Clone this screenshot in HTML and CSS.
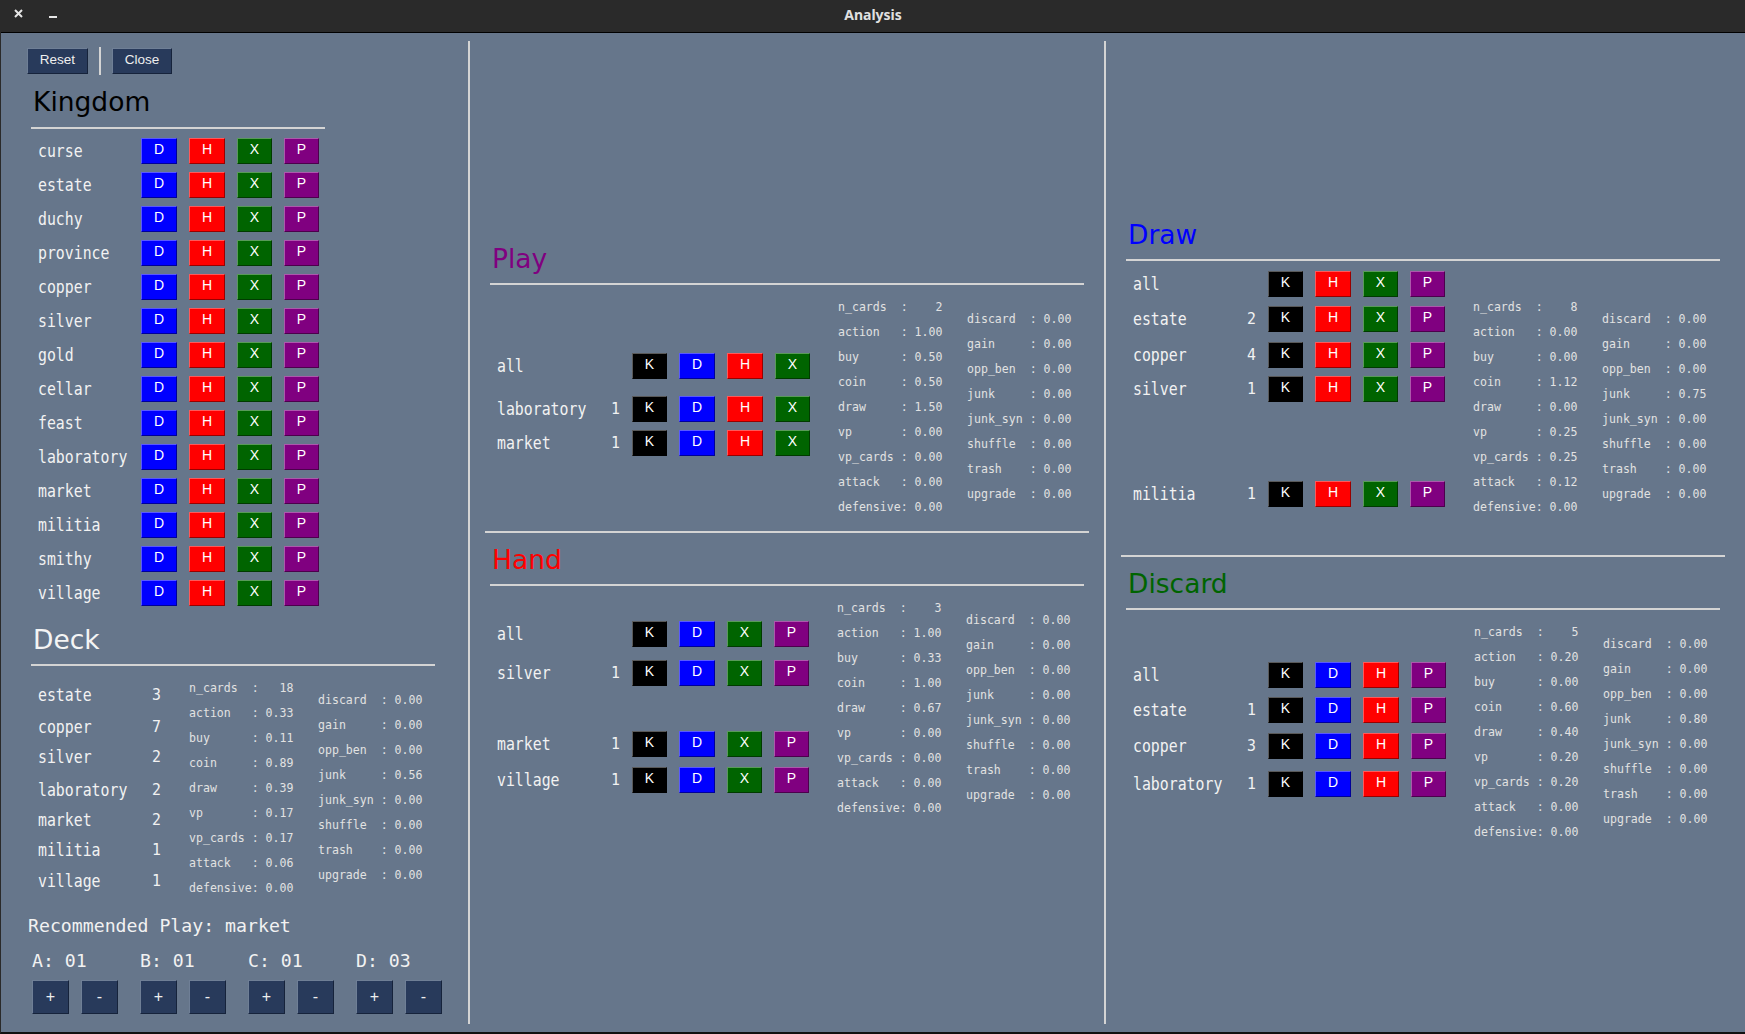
FILE: index.html
```html
<!DOCTYPE html>
<html lang="en">
<head>
    <meta charset="UTF-8">
    <title>Analysis</title>
    <link rel="stylesheet" href="styles.css">
</head>
<body>
<div class="window">
    <header class="titlebar">
        <div class="window-controls">
            <svg class="ctl-close" width="9" height="9" viewBox="0 0 9 9"><path d="M1 1L8 8M8 1L1 8" stroke="#e6e6e6" stroke-width="2"/></svg>
            <svg class="ctl-min" width="8" height="2" viewBox="0 0 8 2"><rect width="8" height="2" fill="#e6e6e6"/></svg>
        </div>
        <div class="title">Analysis</div>
    </header>

    <main class="columns">
        <section class="col col-left">
            <div class="toolbar">
                <button class="nav-btn reset">Reset</button>
                <span class="toolbar-sep"></span>
                <button class="nav-btn close">Close</button>
            </div>

            <div class="kingdom">
                <h2 class="heading h-kingdom">Kingdom</h2>
                <hr class="rule">
                <div class="cards kingdom-cards">
                    <div class="row"><span class="name">curse</span><button class="pile d">D</button><button class="pile h">H</button><button class="pile x">X</button><button class="pile p">P</button></div>
                    <div class="row"><span class="name">estate</span><button class="pile d">D</button><button class="pile h">H</button><button class="pile x">X</button><button class="pile p">P</button></div>
                    <div class="row"><span class="name">duchy</span><button class="pile d">D</button><button class="pile h">H</button><button class="pile x">X</button><button class="pile p">P</button></div>
                    <div class="row"><span class="name">province</span><button class="pile d">D</button><button class="pile h">H</button><button class="pile x">X</button><button class="pile p">P</button></div>
                    <div class="row"><span class="name">copper</span><button class="pile d">D</button><button class="pile h">H</button><button class="pile x">X</button><button class="pile p">P</button></div>
                    <div class="row"><span class="name">silver</span><button class="pile d">D</button><button class="pile h">H</button><button class="pile x">X</button><button class="pile p">P</button></div>
                    <div class="row"><span class="name">gold</span><button class="pile d">D</button><button class="pile h">H</button><button class="pile x">X</button><button class="pile p">P</button></div>
                    <div class="row"><span class="name">cellar</span><button class="pile d">D</button><button class="pile h">H</button><button class="pile x">X</button><button class="pile p">P</button></div>
                    <div class="row"><span class="name">feast</span><button class="pile d">D</button><button class="pile h">H</button><button class="pile x">X</button><button class="pile p">P</button></div>
                    <div class="row"><span class="name">laboratory</span><button class="pile d">D</button><button class="pile h">H</button><button class="pile x">X</button><button class="pile p">P</button></div>
                    <div class="row"><span class="name">market</span><button class="pile d">D</button><button class="pile h">H</button><button class="pile x">X</button><button class="pile p">P</button></div>
                    <div class="row"><span class="name">militia</span><button class="pile d">D</button><button class="pile h">H</button><button class="pile x">X</button><button class="pile p">P</button></div>
                    <div class="row"><span class="name">smithy</span><button class="pile d">D</button><button class="pile h">H</button><button class="pile x">X</button><button class="pile p">P</button></div>
                    <div class="row"><span class="name">village</span><button class="pile d">D</button><button class="pile h">H</button><button class="pile x">X</button><button class="pile p">P</button></div>
                </div>
            </div>

            <div class="deck">
                <h2 class="heading h-deck">Deck</h2>
                <hr class="rule">
                <div class="pile-body">
                    <div class="cards deck-cards">
                        <div class="row"><span class="name">estate</span><span class="count">3</span></div>
                        <div class="row"><span class="name">copper</span><span class="count">7</span></div>
                        <div class="row"><span class="name">silver</span><span class="count">2</span></div>
                        <div class="row"><span class="name">laboratory</span><span class="count">2</span></div>
                        <div class="row"><span class="name">market</span><span class="count">2</span></div>
                        <div class="row"><span class="name">militia</span><span class="count">1</span></div>
                        <div class="row"><span class="name">village</span><span class="count">1</span></div>
                    </div>
<pre class="stats stats-a">n_cards  :   18
action   : 0.33
buy      : 0.11
coin     : 0.89
draw     : 0.39
vp       : 0.17
vp_cards : 0.17
attack   : 0.06
defensive: 0.00</pre>
<pre class="stats stats-b">discard  : 0.00
gain     : 0.00
opp_ben  : 0.00
junk     : 0.56
junk_syn : 0.00
shuffle  : 0.00
trash    : 0.00
upgrade  : 0.00</pre>
                </div>
            </div>

            <div class="recommended">Recommended Play: market</div>
            <div class="counters">
                <div class="counter">
                    <div class="counter-label">A: 01</div>
                    <div class="counter-btns"><button class="step">+</button><button class="step">-</button></div>
                </div>
                <div class="counter">
                    <div class="counter-label">B: 01</div>
                    <div class="counter-btns"><button class="step">+</button><button class="step">-</button></div>
                </div>
                <div class="counter">
                    <div class="counter-label">C: 01</div>
                    <div class="counter-btns"><button class="step">+</button><button class="step">-</button></div>
                </div>
                <div class="counter">
                    <div class="counter-label">D: 03</div>
                    <div class="counter-btns"><button class="step">+</button><button class="step">-</button></div>
                </div>
            </div>
        </section>

        <section class="col col-mid">
            <div class="play">
                <h2 class="heading h-play">Play</h2>
                <hr class="rule">
                <div class="pile-body">
                    <div class="cards play-cards">
                        <div class="row"><span class="name">all</span><span class="count"></span><button class="pile k">K</button><button class="pile d">D</button><button class="pile h">H</button><button class="pile x">X</button></div>
                        <div class="row"><span class="name">laboratory</span><span class="count">1</span><button class="pile k">K</button><button class="pile d">D</button><button class="pile h">H</button><button class="pile x">X</button></div>
                        <div class="row"><span class="name">market</span><span class="count">1</span><button class="pile k">K</button><button class="pile d">D</button><button class="pile h">H</button><button class="pile x">X</button></div>
                    </div>
<pre class="stats stats-a">n_cards  :    2
action   : 1.00
buy      : 0.50
coin     : 0.50
draw     : 1.50
vp       : 0.00
vp_cards : 0.00
attack   : 0.00
defensive: 0.00</pre>
<pre class="stats stats-b">discard  : 0.00
gain     : 0.00
opp_ben  : 0.00
junk     : 0.00
junk_syn : 0.00
shuffle  : 0.00
trash    : 0.00
upgrade  : 0.00</pre>
                </div>
            </div>

            <hr class="rule sep sep-mid">

            <div class="hand">
                <h2 class="heading h-hand">Hand</h2>
                <hr class="rule">
                <div class="pile-body">
                    <div class="cards hand-cards">
                        <div class="row"><span class="name">all</span><span class="count"></span><button class="pile k">K</button><button class="pile d">D</button><button class="pile x">X</button><button class="pile p">P</button></div>
                        <div class="row"><span class="name">silver</span><span class="count">1</span><button class="pile k">K</button><button class="pile d">D</button><button class="pile x">X</button><button class="pile p">P</button></div>
                        <div class="row"><span class="name">market</span><span class="count">1</span><button class="pile k">K</button><button class="pile d">D</button><button class="pile x">X</button><button class="pile p">P</button></div>
                        <div class="row"><span class="name">village</span><span class="count">1</span><button class="pile k">K</button><button class="pile d">D</button><button class="pile x">X</button><button class="pile p">P</button></div>
                    </div>
<pre class="stats stats-a">n_cards  :    3
action   : 1.00
buy      : 0.33
coin     : 1.00
draw     : 0.67
vp       : 0.00
vp_cards : 0.00
attack   : 0.00
defensive: 0.00</pre>
<pre class="stats stats-b">discard  : 0.00
gain     : 0.00
opp_ben  : 0.00
junk     : 0.00
junk_syn : 0.00
shuffle  : 0.00
trash    : 0.00
upgrade  : 0.00</pre>
                </div>
            </div>
        </section>

        <section class="col col-right">
            <div class="draw">
                <h2 class="heading h-draw">Draw</h2>
                <hr class="rule">
                <div class="pile-body">
                    <div class="cards draw-cards">
                        <div class="row"><span class="name">all</span><span class="count"></span><button class="pile k">K</button><button class="pile h">H</button><button class="pile x">X</button><button class="pile p">P</button></div>
                        <div class="row"><span class="name">estate</span><span class="count">2</span><button class="pile k">K</button><button class="pile h">H</button><button class="pile x">X</button><button class="pile p">P</button></div>
                        <div class="row"><span class="name">copper</span><span class="count">4</span><button class="pile k">K</button><button class="pile h">H</button><button class="pile x">X</button><button class="pile p">P</button></div>
                        <div class="row"><span class="name">silver</span><span class="count">1</span><button class="pile k">K</button><button class="pile h">H</button><button class="pile x">X</button><button class="pile p">P</button></div>
                        <div class="row"><span class="name">militia</span><span class="count">1</span><button class="pile k">K</button><button class="pile h">H</button><button class="pile x">X</button><button class="pile p">P</button></div>
                    </div>
<pre class="stats stats-a">n_cards  :    8
action   : 0.00
buy      : 0.00
coin     : 1.12
draw     : 0.00
vp       : 0.25
vp_cards : 0.25
attack   : 0.12
defensive: 0.00</pre>
<pre class="stats stats-b">discard  : 0.00
gain     : 0.00
opp_ben  : 0.00
junk     : 0.75
junk_syn : 0.00
shuffle  : 0.00
trash    : 0.00
upgrade  : 0.00</pre>
                </div>
            </div>

            <hr class="rule sep sep-right">

            <div class="discard">
                <h2 class="heading h-discard">Discard</h2>
                <hr class="rule">
                <div class="pile-body">
                    <div class="cards discard-cards">
                        <div class="row"><span class="name">all</span><span class="count"></span><button class="pile k">K</button><button class="pile d">D</button><button class="pile h">H</button><button class="pile p">P</button></div>
                        <div class="row"><span class="name">estate</span><span class="count">1</span><button class="pile k">K</button><button class="pile d">D</button><button class="pile h">H</button><button class="pile p">P</button></div>
                        <div class="row"><span class="name">copper</span><span class="count">3</span><button class="pile k">K</button><button class="pile d">D</button><button class="pile h">H</button><button class="pile p">P</button></div>
                        <div class="row"><span class="name">laboratory</span><span class="count">1</span><button class="pile k">K</button><button class="pile d">D</button><button class="pile h">H</button><button class="pile p">P</button></div>
                    </div>
<pre class="stats stats-a">n_cards  :    5
action   : 0.20
buy      : 0.00
coin     : 0.60
draw     : 0.40
vp       : 0.20
vp_cards : 0.20
attack   : 0.00
defensive: 0.00</pre>
<pre class="stats stats-b">discard  : 0.00
gain     : 0.00
opp_ben  : 0.00
junk     : 0.80
junk_syn : 0.00
shuffle  : 0.00
trash    : 0.00
upgrade  : 0.00</pre>
                </div>
            </div>
        </section>
    </main>
</div>
</body>
</html>
```
FILE: styles.css
```css
* {
    box-sizing: border-box;
}

body {
    margin: 0;
    overflow: hidden;
    font-family: 'DejaVu Sans Mono', monospace;
    background-color: #66768b;
}

.window {
    display: flex;
    flex-direction: column;
    height: 100vh;
    border-left: 1px solid #2a2a2a;
    border-bottom: 2px solid #111;
}

/* title bar */
.titlebar {
    position: relative;
    flex: none;
    height: 33px;
    background-color: #2a2a2a;
    border-bottom: 1px solid #000;
}

.window-controls {
    display: flex;
    align-items: flex-start;
    padding: 9px 0 0 13px;
    gap: 26px;
}

.ctl-min {
    margin-top: 7px;
}

.title {
    position: absolute;
    top: 5px;
    left: 0;
    right: 0;
    text-align: center;
    font-family: 'Noto Sans', sans-serif;
    font-size: 14px;
    line-height: 20px;
    font-weight: bold;
    color: #e0e0e0;
}

/* columns */
.columns {
    flex: 1;
    display: flex;
    padding: 8px 0;
    min-height: 0;
}

.col {
    flex: none;
    border-right: 2px solid #d4d4d4;
}

.col-left {
    width: 469px;
    padding-left: 26px;
}

.col-mid {
    width: 636px;
    padding-left: 20px;
}

.col-mid > div {
    width: 594px;
}

.col-right {
    flex: 1;
    border-right: none;
    padding-left: 20px;
}

.col-right > div {
    width: 594px;
}

/* toolbar */
.toolbar {
    display: flex;
    align-items: center;
    gap: 11px;
    height: 28px;
    margin-top: 6px;
}

.toolbar-sep {
    width: 2px;
    height: 28px;
    background-color: #d4d4d4;
}

.nav-btn, .step {
    padding: 0;
    background-color: #283a5b;
    color: #eee;
    border: 1px solid;
    border-color: #6f7f96 #16233b #16233b #6f7f96;
    font-family: 'Liberation Sans', sans-serif;
}

.nav-btn {
    height: 26px;
    padding-bottom: 3px;
    font-size: 13.5px;
}

.reset {
    width: 61px;
}

.close {
    width: 60px;
}

/* section headings */
.heading {
    margin: 0;
    padding-left: 2px;
    font-family: 'DejaVu Sans', sans-serif;
    font-size: 26.5px;
    font-weight: normal;
    line-height: 32px;
}

.rule {
    height: 2px;
    margin: 8px 0 0;
    border: none;
    background-color: #d4d4d4;
}

.h-kingdom { color: #000; margin-top: -1px; padding-bottom: 1px; }
.h-deck { color: #f4f4f4; }
.h-play { color: #800080; }
.h-hand { color: #f00; }
.h-draw { color: #00f; }
.h-discard { color: #006400; }

.sep {
    margin-bottom: 11px;
}

.sep-mid {
    width: 604px;
    margin-top: 12px;
    margin-left: -5px;
}

.sep-right {
    width: 604px;
    margin-top: 36px;
    margin-left: -5px;
}

/* card rows */
.cards {
    flex: none;
    display: grid;
    align-content: start;
    padding-left: 7px;
    width: 347px;
}

.row {
    display: flex;
    align-items: center;
    gap: 12px;
    height: 26px;
    color: #f2f2f2;
}

/* the names are in a narrow mono face in the app, so squeeze DejaVu a bit */
.name {
    flex: none;
    width: 102px;
    font-size: 17px;
    line-height: 24px;
    white-space: nowrap;
    transform: scaleX(0.873);
    transform-origin: left;
}

.count {
    flex: none;
    width: 9px;
    font-size: 16.5px;
    line-height: 24px;
    transform: scaleX(0.9);
    transform-origin: left;
}

.pile {
    flex: none;
    width: 36px;
    height: 26px;
    padding: 0 0 4px;
    color: #fff;
    font-family: 'Liberation Sans', sans-serif;
    font-size: 14px;
    border: 1px solid;
    border-color: rgba(255,255,255,0.35) rgba(0,0,0,0.4) rgba(0,0,0,0.4) rgba(255,255,255,0.35);
}

.k { width: 35px; background-color: #000; }
.d { background-color: #00f; }
.h { background-color: #f00; }
.x { width: 35px; background-color: #006400; }
.p { width: 35px; background-color: #800080; }

.kingdom {
    width: 298px;
    margin: 12px 0 0 4px;
}

.kingdom .rule {
    width: 294px;
}

.kingdom-cards {
    grid-auto-rows: 34px;
    padding-top: 9px;
    width: 298px;
}

.kingdom .name {
    width: 91px;
}

.deck {
    width: 404px;
    margin: 10px 0 0 4px;
}

.deck-cards {
    width: 158px;
    padding-top: 16px;
    grid-template-rows: 32px 30px 33px 30px 30px 31px 30px;
}

.play {
    margin-top: 202px;
}

.play-cards {
    width: 348px;
    padding-top: 68px;
    grid-template-rows: 43px 34px 26px;
}

.hand-cards {
    padding-top: 35px;
    grid-template-rows: 39px 71px 36px 26px;
}

.draw {
    margin-top: 178px;
}

.draw-cards {
    padding-top: 10px;
    grid-template-rows: 35px 36px 34px 105px 26px;
}

.discard-cards {
    width: 348px;
    padding-top: 52px;
    grid-template-rows: 35px 36px 38px 26px;
}

/* stat columns */
.pile-body {
    display: flex;
    align-items: flex-start;
}

.stats {
    flex: none;
    width: 104px;
    margin: 9px 25px 0 0;
    font-family: 'DejaVu Sans Mono', monospace;
    font-size: 13px;
    line-height: 25px;
    color: #e2e2e2;
    transform: scaleX(0.89);
    transform-origin: left;
}

.stats-b {
    margin-top: 21px;
    margin-right: 0;
}

.draw .stats-a {
    margin-top: 33px;
}

.draw .stats-b {
    margin-top: 45px;
}

/* recommendation and counters */
.recommended {
    margin: 14px 0 0 1px;
    font-size: 18.2px;
    line-height: 24px;
    color: #f2f2f2;
}

.counters {
    display: flex;
    margin: 11px 0 0 5px;
}

.counter {
    width: 108px;
}

.counter-label {
    font-size: 18.2px;
    line-height: 24px;
    color: #f2f2f2;
}

.counter-btns {
    display: flex;
    gap: 12px;
    margin-top: 7px;
}

.step {
    width: 37px;
    height: 34px;
    font-size: 16px;
}
```
